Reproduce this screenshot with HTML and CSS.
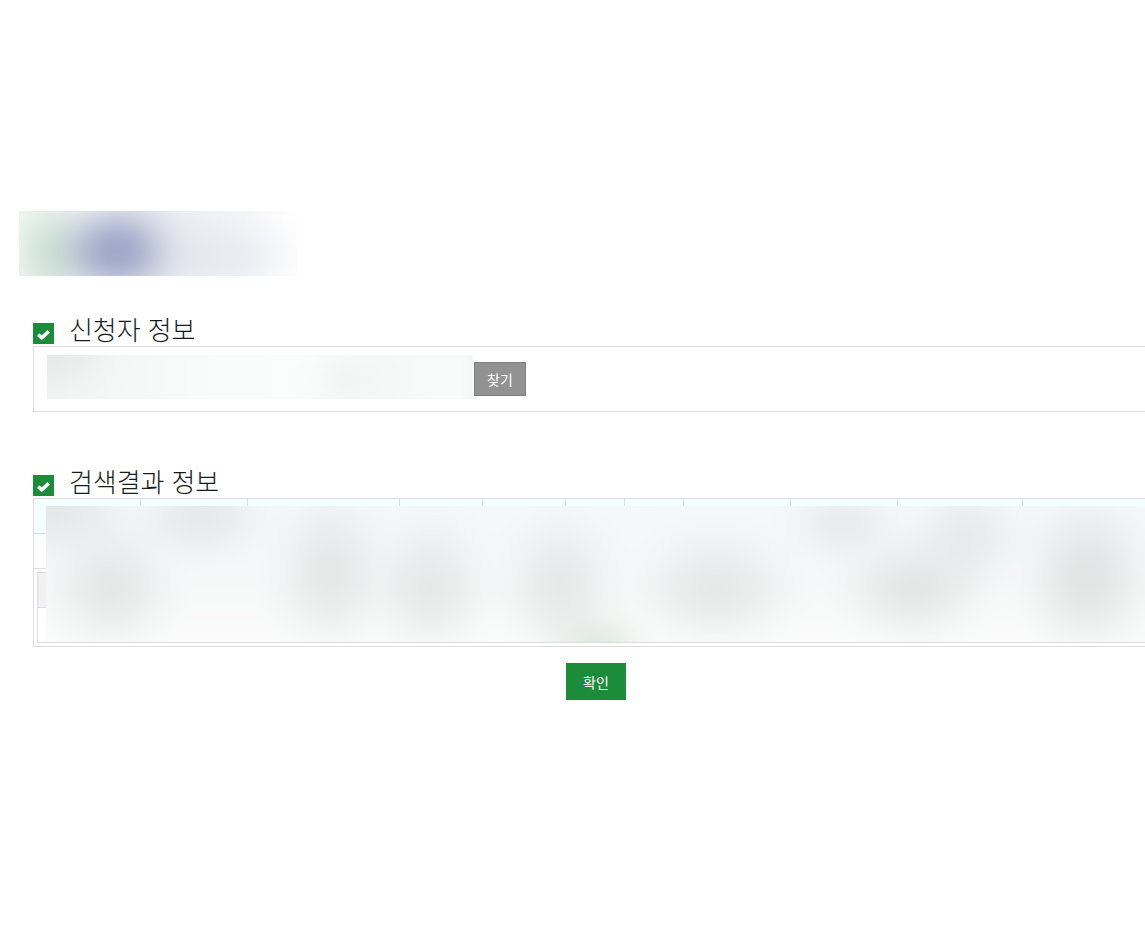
FILE: index.html
```html
<!DOCTYPE html>
<html lang="ko">
<head>
<meta charset="utf-8">
<title>신청자 정보</title>
<link rel="stylesheet" href="styles.css">
</head>
<body>
<main class="page">
  <div class="logo"></div>

  <section class="section applicant">
    <h2 class="heading">
      <span class="check"><svg viewBox="0 0 21 21" width="21" height="21"><path class="tick" d="M5.2 11.6l3.6 3.3 7-6.7"/></svg></span>
      <span class="title">신청자 정보</span>
    </h2>
    <div class="panel search-panel">
      <div class="search-blur"></div>
      <button class="find" type="button">찾기</button>
    </div>
  </section>

  <section class="section results">
    <h2 class="heading">
      <span class="check"><svg viewBox="0 0 21 21" width="21" height="21"><path class="tick" d="M5.2 11.6l3.6 3.3 7-6.7"/></svg></span>
      <span class="title">검색결과 정보</span>
    </h2>
    <div class="panel result-panel">
      <div class="grid-head">
        <i class="c1"></i><i class="c2"></i><i class="c3"></i><i class="c4"></i><i class="c5"></i><i class="c6"></i><i class="c7"></i><i class="c8"></i><i class="c9"></i><i class="c10"></i><i class="c11"></i>
      </div>
      <div class="grid-row"></div>
      <div class="nested">
        <div class="nested-head"></div>
        <div class="nested-row"></div>
      </div>
      <div class="result-blur"></div>
    </div>
  </section>

  <div class="actions"><button class="confirm" type="button">확인</button></div>
</main>
</body>
</html>
```
FILE: styles.css
```css
html, body {
  margin: 0;
  padding: 0;
  background: #fff;
  overflow: hidden;
  height: 950px;
}
body {
  font-family: "Noto Sans CJK KR", "Noto Sans", sans-serif;
  color: #222;
}
.page {
  width: 1400px;
  padding: 211px 0 0 33px;
}
.logo {
  position: relative;
  overflow: hidden;
  width: 278px;
  height: 65px;
  margin-left: -14px;
}
.logo::before {
  content: "";
  position: absolute;
  inset: -30px;
  filter: blur(16px);
  background:
    radial-gradient(ellipse 60px 46px at 127px 70px, rgba(150,158,195,1) 35%, rgba(150,158,195,0) 100%),
    radial-gradient(ellipse 36px 55px at 61px 72px, rgba(198,222,206,1) 30%, rgba(198,222,206,0) 100%),
    radial-gradient(ellipse 130px 30px at 200px 75px, rgba(226,229,236,.9) 30%, rgba(226,229,236,0) 100%),
    linear-gradient(90deg, #f4f7f5 0, #f4f7f5 30px, #e8ebf0 150px, #f0f1f5 220px, #f6f6f9 265px, #fff 300px);
}
.section { width: 1300px; }
.applicant { margin-top: 28px; }
.results { margin-top: 44px; }
.heading {
  display: flex;
  align-items: flex-end;
  gap: 15px;
  height: 40px;
  margin: 0 0 2px;
  font-size: 26px;
  line-height: 36px;
  font-weight: 300;
  letter-spacing: -0.1px;
  color: #1a1a1a;
}
.title { position: relative; top: 3px; }
.check {
  flex: none;
  display: block;
  width: 21px;
  height: 21px;
  background: #1c8c3b;
}
.check svg { display: block; }
.tick {
  fill: none;
  stroke: #fff;
  stroke-width: 3.6;
  stroke-linecap: butt;
  stroke-linejoin: miter;
}
.panel {
  position: relative;
  border: 1px solid #ddd;
  box-sizing: border-box;
}
.search-panel {
  display: flex;
  align-items: center;
  height: 66px;
  padding-left: 440px;
}
.search-blur {
  position: absolute;
  left: 13px;
  top: 8px;
  width: 426px;
  height: 44px;
  overflow: hidden;
}
.search-blur::before {
  content: "";
  position: absolute;
  inset: -30px;
  filter: blur(12px);
  background:
    radial-gradient(ellipse 70px 34px at 30px 30px, #e6e9e8 30%, rgba(230,233,232,0) 100%),
    radial-gradient(ellipse 45px 30px at 330px 55px, rgba(238,240,240,.9), rgba(238,240,240,0) 100%),
    linear-gradient(90deg, #f0f2f1 0, #f5f7f6 100px, #fafcfc 200px, #fbfdfd 300px, #f6f8f8 380px, #fafcfc 430px, #f8fafa 460px, #dcdedd 490px);
}
.find {
  width: 52px;
  height: 34px;
  padding: 0;
  margin-bottom: 1px;
  border: 1px solid #7d7d7d;
  background: #929292;
  color: #fff;
  font: 400 14px/1 "Noto Sans CJK KR", sans-serif;
}
.result-panel { height: 149px; }
.grid-head {
  display: flex;
  height: 34px;
  background: #f5ffff;
  border-bottom: 1px solid #ddd;
}
.grid-head i {
  display: block;
  flex: none;
  box-sizing: border-box;
  border-right: 1px solid #ddd;
}
.grid-head .c1 { width: 107px; }
.grid-head .c2 { width: 107px; }
.grid-head .c3 { width: 152px; }
.grid-head .c4 { width: 83px; }
.grid-head .c5 { width: 83px; }
.grid-head .c6 { width: 59px; }
.grid-head .c7 { width: 59px; }
.grid-head .c8 { width: 107px; }
.grid-head .c9 { width: 107px; }
.grid-head .c10 { width: 125px; }
.grid-head .c11 { width: 200px; border-right: 0; }
.grid-row {
  height: 34px;
  border-bottom: 1px solid #ddd;
}
.nested {
  margin: 3px 3px 0;
  height: 71px;
  border: 1px solid #ddd;
  box-sizing: border-box;
}
.nested-head {
  height: 34px;
  background: #f1f1f3;
  border-bottom: 1px solid #ddd;
}
.result-blur {
  position: absolute;
  left: 12px;
  top: 7px;
  width: 1099px;
  height: 136px;
  overflow: hidden;
}
.result-blur::before {
  content: "";
  position: absolute;
  inset: -30px;
  filter: blur(16px);
  background:
    radial-gradient(ellipse 90px 50px at 30px 30px, rgba(224,228,227,1) 20%, rgba(224,228,227,0) 100%),
    radial-gradient(ellipse 65px 70px at 95px 110px, rgba(228,230,230,1) 20%, rgba(228,230,230,0) 100%),
    radial-gradient(ellipse 70px 40px at 185px 41px, rgba(226,229,229,1) 20%, rgba(226,229,229,0) 100%),
    radial-gradient(ellipse 58px 85px at 314px 95px, rgba(228,230,230,1) 20%, rgba(228,230,230,0) 100%),
    radial-gradient(ellipse 60px 75px at 414px 110px, rgba(229,231,231,1) 20%, rgba(229,231,231,0) 100%),
    radial-gradient(ellipse 60px 75px at 544px 108px, rgba(229,231,231,1) 20%, rgba(229,231,231,0) 100%),
    radial-gradient(ellipse 50px 24px at 581px 172px, rgba(205,226,211,1) 35%, rgba(205,226,211,0) 100%),
    radial-gradient(ellipse 85px 60px at 700px 112px, rgba(229,231,231,1) 20%, rgba(229,231,231,0) 100%),
    radial-gradient(ellipse 55px 40px at 827px 47px, rgba(229,232,232,1) 20%, rgba(229,232,232,0) 100%),
    radial-gradient(ellipse 75px 55px at 897px 112px, rgba(226,228,228,1) 20%, rgba(226,228,228,0) 100%),
    radial-gradient(ellipse 55px 55px at 951px 60px, rgba(229,232,232,1) 20%, rgba(229,232,232,0) 100%),
    radial-gradient(ellipse 65px 85px at 1071px 100px, rgba(224,226,226,1) 20%, rgba(224,226,226,0) 100%),
    linear-gradient(180deg, #f4f8f9 0, #f5f8f9 40%, #f7f8f8 62%, #fbfbfb 82%, #fefefe 100%);
}
.actions {
  display: flex;
  width: 1126px;
  justify-content: center;
  margin-top: 16px;
}
.confirm {
  width: 60px;
  height: 37px;
  padding: 0;
  border: 0;
  background: #1c8c3b;
  color: #fff;
  font: 400 14px/1 "Noto Sans CJK KR", sans-serif;
}
```
